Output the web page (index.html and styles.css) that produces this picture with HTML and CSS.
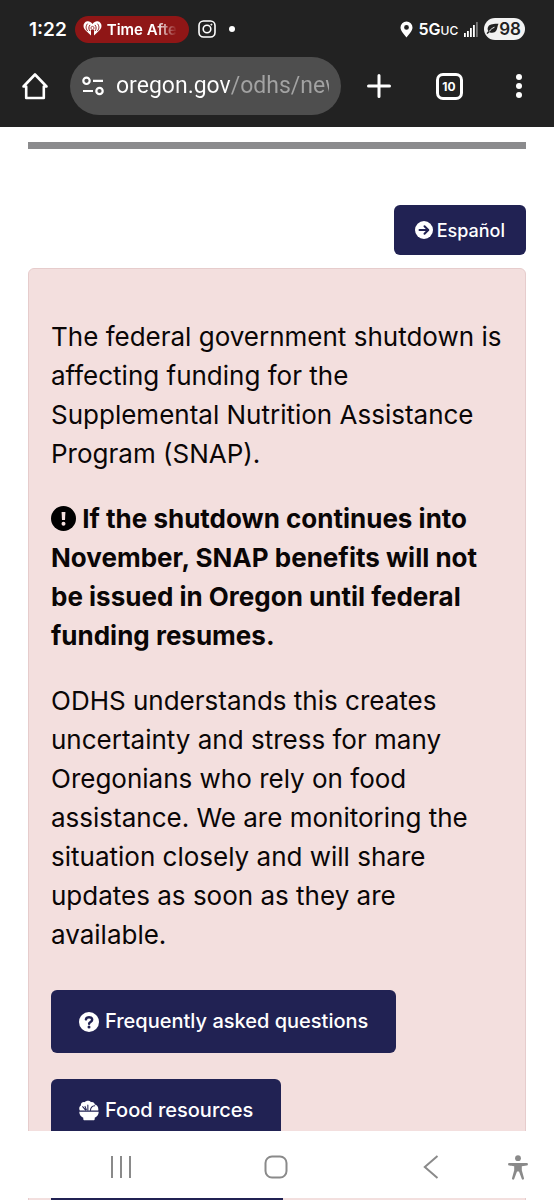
FILE: index.html
```
<!DOCTYPE html>
<html lang="en">
<head>
    <meta charset="UTF-8">
    <meta name="viewport" content="width=device-width, initial-scale=1.0">
    <title>ODHS - SNAP benefits</title>
    <link rel="stylesheet" href="styles.css">
</head>
<body>
    <header class="browser">
        <div class="status-bar">
            <span class="clock">1:22</span>
            <span class="media-chip">
                <svg width="19" height="16" viewBox="0 0 19 16" aria-hidden="true">
                    <path fill="#fff" d="M9.500 3C8 .6 5.800 0 4.300.3 1.900.8.500 2.700.500 5c0 2.500 1.800 4.200 3.500 5.800L8 14.500V9h3v5.500l4-3.700C16.700 9.200 18.500 7.500 18.500 5c0-2.300-1.400-4.200-3.800-4.700C13.200 0 11 .6 9.500 3z"/>
                    <circle cx="9.500" cy="7" r="1.600" fill="#fff" stroke="#8f1616" stroke-width=".8"/>
                    <path fill="none" stroke="#8f1616" stroke-width="1" stroke-linecap="round" d="M6.800 4.200c-1.300 1.500-1.300 4 0 5.600M12.200 4.200c1.300 1.500 1.300 4 0 5.600M4.300 3c-1.700 2-1.700 4.700.2 6.800M14.700 3c1.700 2 1.700 4.700-.2 6.800"/>
                </svg>
                <span class="media-title">Time Afte</span>
            </span>
            <svg class="instagram" width="18" height="18" viewBox="0 0 18 18" fill="none" stroke="#fff" stroke-width="1.600" aria-hidden="true">
                <rect x="1" y="1" width="16" height="16" rx="4.500"/>
                <circle cx="9" cy="9" r="3.800"/>
                <circle cx="13.400" cy="4.600" r=".6" fill="#fff" stroke-width=".8"/>
            </svg>
            <span class="more-dot"></span>
            <div class="signals">
                <svg width="13" height="17" viewBox="0 0 13 17" aria-hidden="true">
                    <path fill="#fff" fill-rule="evenodd" d="M6.500.500a6 6 0 0 1 6 6c0 3.500-3.500 6.500-6 10-2.500-3.500-6-6.500-6-10a6 6 0 0 1 6-6zm0 3.500a2.400 2.400 0 1 0 0 4.800 2.400 2.400 0 0 0 0-4.800z"/>
                </svg>
                <span class="network">5G<small>UC</small></span>
                <svg width="14" height="15" viewBox="0 0 14 15" fill="#fff" aria-hidden="true">
                    <rect x="0" y="11" width="1.800" height="4"/>
                    <rect x="3" y="9" width="1.800" height="6"/>
                    <rect x="6" y="6" width="1.800" height="9"/>
                    <rect x="9" y="3" width="1.800" height="12"/>
                    <rect x="12" y="0" width="1.800" height="15" fill="#777"/>
                </svg>
                <span class="battery">
                    <svg width="13" height="12" viewBox="0 0 13 12" aria-hidden="true">
                        <path fill="#222" d="M12.500.800C8 .8 4 1 2.300 3.500c-1 1.500-.8 3.300 0 4.500L.500 10.200l1 .8 2-1.800c2.500 1.200 5.500.6 6.800-1.600C11.500 5.500 11.300 3 12.500.800z"/>
                        <path fill="none" stroke="#f2f2f2" stroke-width="1" d="M3.200 8.500C4.500 6.500 6 5.300 8.500 4.200"/>
                    </svg>98
                </span>
            </div>
        </div>
        <div class="toolbar">
            <button class="tool home" aria-label="Home">
                <svg width="28" height="28" viewBox="0 0 28 28" fill="none" stroke="#fff" stroke-width="2.600" stroke-linejoin="round" stroke-linecap="round">
                    <path d="M2.500 14.500 14 2.500l11.500 12h-2.700V26H5.200V14.500z"/>
                </svg>
            </button>
            <div class="address">
                <svg width="22" height="20" viewBox="0 0 22 20" fill="none" stroke="#fff" stroke-width="2.200" aria-hidden="true">
                    <circle cx="4.500" cy="4.800" r="3.200"/>
                    <path d="M11 4.800h10M1 15h10"/>
                    <circle cx="17.500" cy="15" r="3.200"/>
                </svg>
                <input type="text" class="url" aria-label="Address" value="oregon.gov/odhs/news">
            </div>
            <button class="tool" aria-label="New tab">
                <svg width="24" height="24" viewBox="0 0 24 24" fill="none" stroke="#fff" stroke-width="3" stroke-linecap="round">
                    <path d="M12 1.500v21M1.500 12h21"/>
                </svg>
            </button>
            <button class="tool" aria-label="Open tabs"><span class="tab-count">10</span></button>
            <button class="tool" aria-label="Menu">
                <svg width="8" height="26" viewBox="0 0 8 26" fill="#fff">
                    <circle cx="4" cy="4" r="3"/>
                    <circle cx="4" cy="13" r="3"/>
                    <circle cx="4" cy="22" r="3"/>
                </svg>
            </button>
        </div>
    </header>

    <main class="page">
        <hr class="rule">
        <div class="language">
            <a class="btn btn-small" href="#es" lang="es">
                <svg width="18" height="18" viewBox="0 0 18 18" aria-hidden="true">
                    <circle cx="9" cy="9" r="9" fill="#fff"/>
                    <path fill="none" stroke="#212253" stroke-width="2" stroke-linecap="round" stroke-linejoin="round" d="M4.500 9h8.500M9.500 5.200 13.300 9l-3.800 3.800"/>
                </svg>
                Español
            </a>
        </div>

        <section class="alert">
            <p>The federal government shutdown is affecting funding for the Supplemental Nutrition Assistance Program (SNAP).</p>
            <p class="strong">
                <svg class="warn" width="25" height="25" viewBox="0 0 25 25" aria-hidden="true">
                    <circle cx="12.500" cy="12.500" r="12.500"/>
                    <path fill="#f3dfde" d="M10.600 6h3.800l-.4 8h-3z"/>
                    <circle cx="12.500" cy="17.700" r="2" fill="#f3dfde"/>
                </svg>
                If the shutdown continues into November, SNAP benefits will not be issued in Oregon until federal funding resumes.
            </p>
            <p>ODHS understands this creates uncertainty and stress for many Oregonians who rely on food assistance. We are monitoring the situation closely and will share updates as soon as they are available.</p>

            <div class="actions">
                <a class="btn" href="#faq">
                    <svg width="20" height="20" viewBox="0 0 20 20" aria-hidden="true">
                        <circle cx="10" cy="10" r="10" fill="#fff"/>
                        <path fill="none" stroke="#212253" stroke-width="2.400" stroke-linecap="round" d="M6.900 7.400c.3-1.500 1.400-2.200 3.100-2.200 1.900 0 3.200 1 3.200 2.600 0 2.200-3.100 2.100-3.100 4"/>
                        <circle cx="10" cy="15" r="1.500" fill="#212253"/>
                    </svg>
                    Frequently asked questions
                </a>
                <a class="btn" href="#food">
                    <svg width="20" height="21" viewBox="0 0 21 21" aria-hidden="true">
                        <path fill="#fff" d="M.800 10.500C-.3 8.500.3 6 2 5.300 1.500 2.800 3.800 1.200 6 1.800 7.500-.2 11-.4 12.600 1.800c2-.5 3.800.5 4 2.500 2.500.2 4.200 3 3.600 6.200z"/>
                        <path fill="none" stroke="#212253" stroke-width="1.100" stroke-linecap="round" d="M3.800 6.500 7 10.200M9.300 4.800v5.400M12 10.500c.2-2.800 1.800-4.800 4.500-5M6.300 6.200l1.400 3.500"/>
                        <path fill="#fff" d="M.300 11.800h20.400c0 3-1.700 5.200-4.200 6.300v1.300c0 .9-.6 1.400-1.400 1.400H5.900c-.8 0-1.400-.5-1.400-1.400v-1.300C2 17 .3 14.800.3 11.800z"/>
                    </svg>
                    Food resources
                </a>
                <div class="next-block"></div>
            </div>
        </section>
    </main>

    <nav class="system-nav">
        <button aria-label="Recent apps">
            <svg width="22" height="22" viewBox="0 0 22 22" stroke="#8a8a8a" stroke-width="2"><path d="M2 0v22M11 0v22M20 0v22"/></svg>
        </button>
        <button aria-label="Home screen">
            <svg width="24" height="24" viewBox="0 0 24 24" fill="none" stroke="#8a8a8a" stroke-width="2"><rect x="1.500" y="1.500" width="21" height="21" rx="6.500"/></svg>
        </button>
        <button aria-label="Back">
            <svg width="16" height="24" viewBox="0 0 16 24" fill="none" stroke="#8a8a8a" stroke-width="2"><path d="M14.500 1 1.800 12l12.700 11"/></svg>
        </button>
        <button class="a11y" aria-label="Accessibility">
            <svg width="20" height="25" viewBox="0 0 20 25" fill="#8a8a8a">
                <circle cx="10" cy="3.200" r="2.900"/>
                <path d="M1.200 8h17.600c1.500 0 1.500 2.400 0 2.500l-5 .7v4l2.200 8c.4 1.500-1.700 2.100-2.200.7L11 16.500H9l-2.800 7.400c-.5 1.400-2.600.8-2.200-.7l2.200-8v-4l-5-.7C-.3 10.400-.3 8 1.200 8z"/>
            </svg>
        </button>
    </nav>
</body>
</html>
```
FILE: styles.css
```
* {
    margin: 0;
    padding: 0;
    box-sizing: border-box;
}

body {
    display: flex;
    flex-direction: column;
    height: 100vh;
    overflow: hidden;
    font-family: Inter, "Liberation Sans", sans-serif;
    color: #0a0606;
    background-color: #fff;
}

button {
    border: none;
    background: none;
    cursor: pointer;
}

svg {
    flex: none;
}

/* Browser chrome */
.browser {
    flex: none;
    background-color: #222;
    color: #fff;
    padding: 15px 0 12px;
}

.status-bar {
    display: flex;
    align-items: center;
    height: 28px;
    padding: 0 29px;
    font-weight: 600;
}

.clock {
    font-size: 19px;
}

.media-chip {
    display: flex;
    align-items: center;
    gap: 5px;
    height: 27px;
    margin-left: 8px;
    padding: 0 12px 0 8px;
    border-radius: 14px;
    background-color: #8f1616;
}

.media-title {
    white-space: nowrap;
    font-size: 15px;
    mask-image: linear-gradient(to right, #000 70%, transparent);
}

.instagram {
    margin-left: 9px;
}

.more-dot {
    width: 6px;
    height: 6px;
    margin-left: 13px;
    border-radius: 50%;
    background-color: #fff;
}

.signals {
    display: flex;
    align-items: center;
    gap: 6px;
    margin-left: auto;
}

.network {
    font-size: 16px;
}

.network small {
    font-size: 12px;
    font-weight: 500;
}

.battery {
    display: flex;
    align-items: center;
    height: 22px;
    padding: 0 4px 0 2px;
    border-radius: 11px;
    background-color: #f2f2f2;
    color: #222;
    font-size: 17px;
}

.toolbar {
    display: flex;
    align-items: center;
    height: 58px;
    margin-top: 14px;
}

.tool {
    display: flex;
    align-items: center;
    justify-content: center;
    flex: none;
    width: 70px;
    height: 58px;
}

.address {
    display: flex;
    flex: 1;
    align-items: center;
    gap: 12px;
    min-width: 0;
    height: 58px;
    margin-right: 3px;
    padding: 0 12px;
    border-radius: 29px;
    background-color: #4e4e4e;
}

.url {
    flex: 1;
    min-width: 0;
    border: none;
    outline: none;
    font-family: Roboto, sans-serif;
    font-size: 23px;
    line-height: 36px;
    color: transparent;
    /* host in white, path in grey */
    background: linear-gradient(to right, #fff 115px, #a3a3a3 115px);
    background-clip: text;
    -webkit-background-clip: text;
}

.tab-count {
    width: 27px;
    height: 27px;
    border: 3px solid #fff;
    border-radius: 7px;
    color: #fff;
    font-family: Inter, sans-serif;
    font-size: 12px;
    font-weight: 700;
    line-height: 21px;
}

/* Page content */
.page {
    flex: 1;
    min-height: 0;
    overflow: hidden;
    padding: 15px 28px 0;
}

.rule {
    height: 7px;
    border: none;
    background-color: #8b8b8d;
}

.language {
    display: flex;
    justify-content: flex-end;
    margin: 56px 0 13px;
}

.btn {
    display: flex;
    align-items: center;
    gap: 6px;
    height: 63px;
    padding: 0 28px;
    border-radius: 6px;
    background-color: #212253;
    color: #fff;
    font-size: 20px;
    font-weight: 500;
    text-decoration: none;
}

.btn-small {
    gap: 4px;
    height: 50px;
    padding: 0 21px;
    font-size: 18px;
}

.alert {
    padding: 48px 22px;
    border: 1px solid #e6cccc;
    border-radius: 6px;
    background-color: #f3dfde;
    font-size: 26px;
    line-height: 39px;
}

.alert p {
    margin-bottom: 26px;
}

.strong {
    font-weight: 700;
}

.warn {
    vertical-align: -3px;
}

.actions {
    display: flex;
    flex-direction: column;
    align-items: flex-start;
    gap: 26px;
    margin-top: 36px;
}

.next-block {
    width: 232px;
    height: 63px;
    background-color: #212253;
}

/* System navigation over the page */
.system-nav {
    position: fixed;
    right: 0;
    bottom: 2px;
    left: 0;
    display: flex;
    height: 67px;
    padding: 5px 0 0 44px;
    background-color: #fff;
}

.system-nav button {
    display: flex;
    flex: 1;
    align-items: center;
    justify-content: center;
}

.system-nav .a11y {
    flex: none;
    justify-content: flex-start;
    width: 46px;
}
```
